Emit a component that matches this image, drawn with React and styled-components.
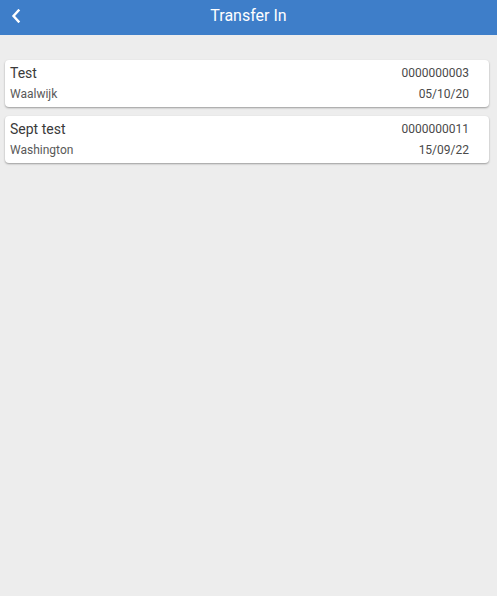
import React from 'react';
import styled, { createGlobalStyle } from 'styled-components';

const GlobalStyle = createGlobalStyle`
  html, body {
    margin: 0;
    padding: 0;
    background: #ededed;
    font-family: Roboto, "Liberation Sans", sans-serif;
  }
`;

const transfers = [
  { id: 1, name: 'Test', number: '0000000003', place: 'Waalwijk', date: '05/10/20' },
  { id: 2, name: 'Sept test', number: '0000000011', place: 'Washington', date: '15/09/22' },
];

const App = () => {
  return (
    <Page>
      <GlobalStyle />
      <Header>
        <BackBtn>
          <svg width="10" height="14" viewBox="0 0 10 14">
            <path d="M7.5 1.5 L2.5 7 L7.5 12.5" fill="none" stroke="#fff" strokeWidth="2.4" strokeLinecap="square" />
          </svg>
        </BackBtn>
        <Title>Transfer In</Title>
      </Header>

      <List>
        {transfers.map(el => (
          <Card key={el.id}>
            <Row>
              <Name>{el.name}</Name>
              <Meta>{el.number}</Meta>
            </Row>
            <Row tall>
              <Sub>{el.place}</Sub>
              <Meta>{el.date}</Meta>
            </Row>
          </Card>
        ))}
      </List>
    </Page>
  );
};

export default App;

const Page = styled.div`
  min-height: 596px;
  background: #ededed;
`;

const Header = styled.div`
  position: relative;
  height: 35px;
  background: #3e7ec9;
  display: flex;
  align-items: center;
  justify-content: center;
`;

const BackBtn = styled.div`
  position: absolute;
  left: 11px;
  top: 9px;
  display: flex;
`;

const Title = styled.div`
  color: #fff;
  font-size: 16px;
  margin-top: -5px;
`;

const List = styled.div`
  padding: 25px 8px 0 5px;
  display: flex;
  flex-direction: column;
  gap: 9px;
`;

const Card = styled.div`
  background: #fff;
  border-radius: 4px;
  box-shadow: 0 1px 2px rgba(0, 0, 0, 0.35);
  padding: 3px 20px 3px 5px;
`;

const Row = styled.div`
  display: flex;
  justify-content: space-between;
  align-items: ${(props) => (props.tall ? 'flex-end' : 'center')};
  height: ${(props) => (props.tall ? '18px' : '20px')};
  padding-bottom: ${(props) => (props.tall ? '3px' : '0')};
`;

const Name = styled.div`
  font-size: 14px;
  color: #3a3a3a;
`;

const Sub = styled.div`
  font-size: 12px;
  color: #595959;
`;

const Meta = styled.div`
  font-size: 12px;
  color: #4a4a4a;
`;
